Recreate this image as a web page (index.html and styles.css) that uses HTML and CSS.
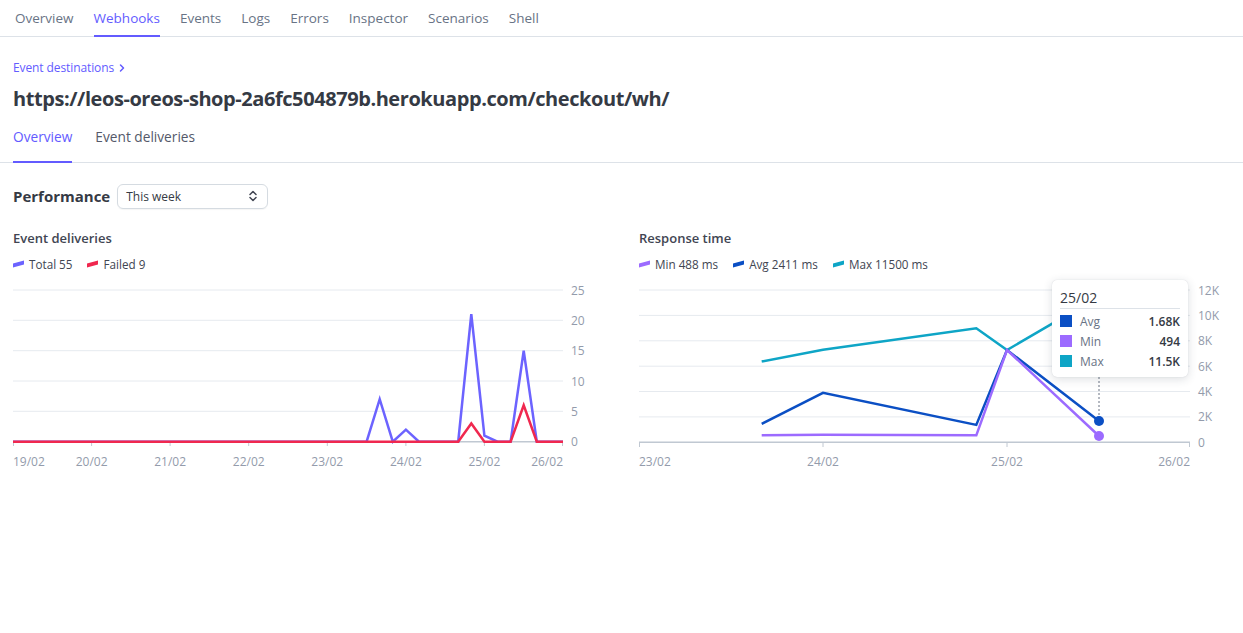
FILE: index.html
```html
<!DOCTYPE html>
<html lang="en">
<head>
<meta charset="utf-8">
<title>Webhook destination</title>
<link rel="stylesheet" href="styles.css">
</head>
<body>
<nav class="topnav">
  <a class="topnav-item">Overview</a>
  <a class="topnav-item is-active">Webhooks</a>
  <a class="topnav-item">Events</a>
  <a class="topnav-item">Logs</a>
  <a class="topnav-item">Errors</a>
  <a class="topnav-item">Inspector</a>
  <a class="topnav-item">Scenarios</a>
  <a class="topnav-item">Shell</a>
</nav>

<header class="header">
  <div class="breadcrumb">Event destinations
    <svg class="breadcrumb-chev" width="8" height="10" viewBox="0 0 8 10"><path d="M2.5 2L5.5 5 2.5 8" fill="none" stroke="#635bff" stroke-width="1.5" stroke-linecap="round" stroke-linejoin="round"/></svg>
  </div>
  <h1 class="title">https://leos-oreos-shop-2a6fc504879b.herokuapp.com/checkout/wh/</h1>
</header>

<div class="subtabs">
  <a class="subtab is-active">Overview</a>
  <a class="subtab">Event deliveries</a>
</div>

<section class="perf">
  <div class="perf-head">
    <h2 class="perf-title">Performance</h2>
    <div class="select">
      <span>This week</span>
      <svg width="12" height="14" viewBox="0 0 12 14"><path d="M3 5.5L6 2.5l3 3M3 8.5l3 3 3-3" fill="none" stroke="#414552" stroke-width="1.5" stroke-linecap="round" stroke-linejoin="round"/></svg>
    </div>
  </div>

  <div class="charts">
    <div class="chart">
      <h3 class="chart-title">Event deliveries</h3>
      <div class="legend">
        <span class="legend-item"><i class="swatch sw-total"></i>Total 55</span>
        <span class="legend-item"><i class="swatch sw-failed"></i>Failed 9</span>
      </div>
      <div class="plot">
        <svg width="580" height="190" viewBox="0 0 580 190">
          <g stroke="#e6eaef" stroke-width="1">
            <line x1="0" y1="10" x2="550" y2="10"/>
            <line x1="0" y1="40.3" x2="550" y2="40.3"/>
            <line x1="0" y1="70.7" x2="550" y2="70.7"/>
            <line x1="0" y1="101" x2="550" y2="101"/>
            <line x1="0" y1="131.3" x2="550" y2="131.3"/>
          </g>
          <line x1="0" y1="161.7" x2="550" y2="161.7" stroke="#c0c8d2" stroke-width="1.5"/>
          <g stroke="#c0c8d2" stroke-width="1">
            <line x1="0.5" y1="161.7" x2="0.5" y2="166"/>
            <line x1="78.6" y1="161.7" x2="78.6" y2="166"/>
            <line x1="157.1" y1="161.7" x2="157.1" y2="166"/>
            <line x1="235.7" y1="161.7" x2="235.7" y2="166"/>
            <line x1="314.3" y1="161.7" x2="314.3" y2="166"/>
            <line x1="392.9" y1="161.7" x2="392.9" y2="166"/>
            <line x1="471.4" y1="161.7" x2="471.4" y2="166"/>
            <line x1="549.5" y1="161.7" x2="549.5" y2="166"/>
          </g>
          <g class="axis-text">
            <text x="558" y="14.5">25</text>
            <text x="558" y="44.8">20</text>
            <text x="558" y="75.2">15</text>
            <text x="558" y="105.5">10</text>
            <text x="558" y="135.8">5</text>
            <text x="558" y="166.2">0</text>
          </g>
          <g class="axis-text">
            <text x="0" y="186">19/02</text>
            <text x="78.6" y="186" text-anchor="middle">20/02</text>
            <text x="157.1" y="186" text-anchor="middle">21/02</text>
            <text x="235.7" y="186" text-anchor="middle">22/02</text>
            <text x="314.3" y="186" text-anchor="middle">23/02</text>
            <text x="392.9" y="186" text-anchor="middle">24/02</text>
            <text x="471.4" y="186" text-anchor="middle">25/02</text>
            <text x="550" y="186" text-anchor="end">26/02</text>
          </g>
          <polyline fill="none" stroke="#6c63ff" stroke-width="2.5" points="0,161.7 353.6,161.7 366.7,119.2 379.8,161.7 392.9,149.6 406,161.7 445.2,161.7 458.3,34.2 471.4,155.6 484.5,161.7 497.6,161.7 510.7,70.7 523.8,161.7 550,161.7"/>
          <polyline fill="none" stroke="#f0284f" stroke-width="2.5" points="0,161.7 445.2,161.7 458.3,143.5 471.4,161.7 497.6,161.7 510.7,125.3 523.8,161.7 550,161.7"/>
        </svg>
      </div>
    </div>

    <div class="chart">
      <h3 class="chart-title">Response time</h3>
      <div class="legend">
        <span class="legend-item"><i class="swatch sw-min"></i>Min 488 ms</span>
        <span class="legend-item"><i class="swatch sw-avg"></i>Avg 2411 ms</span>
        <span class="legend-item"><i class="swatch sw-max"></i>Max 11500 ms</span>
      </div>
      <div class="plot">
        <svg width="580" height="190" viewBox="0 0 580 190">
          <g stroke="#e6eaef" stroke-width="1">
            <line x1="0" y1="10" x2="551" y2="10"/>
            <line x1="0" y1="35.4" x2="551" y2="35.4"/>
            <line x1="0" y1="60.8" x2="551" y2="60.8"/>
            <line x1="0" y1="86.2" x2="551" y2="86.2"/>
            <line x1="0" y1="111.5" x2="551" y2="111.5"/>
            <line x1="0" y1="136.9" x2="551" y2="136.9"/>
          </g>
          <line x1="0" y1="162.3" x2="551" y2="162.3" stroke="#c0c8d2" stroke-width="1.5"/>
          <g stroke="#c0c8d2" stroke-width="1">
            <line x1="0.5" y1="162.3" x2="0.5" y2="167"/>
            <line x1="184" y1="162.3" x2="184" y2="167"/>
            <line x1="368" y1="162.3" x2="368" y2="167"/>
            <line x1="550.5" y1="162.3" x2="550.5" y2="167"/>
          </g>
          <g class="axis-text">
            <text x="559" y="14.5">12K</text>
            <text x="559" y="39.9">10K</text>
            <text x="559" y="65.3">8K</text>
            <text x="559" y="90.7">6K</text>
            <text x="559" y="116">4K</text>
            <text x="559" y="141.4">2K</text>
            <text x="559" y="166.8">0</text>
          </g>
          <g class="axis-text">
            <text x="0" y="186">23/02</text>
            <text x="184" y="186" text-anchor="middle">24/02</text>
            <text x="368" y="186" text-anchor="middle">25/02</text>
            <text x="551" y="186" text-anchor="end">26/02</text>
          </g>
          <polyline fill="none" stroke="#0ea5c6" stroke-width="2.5" points="122.7,81.5 184,69.7 337.3,48.3 368,70 460,16.4"/>
          <polyline fill="none" stroke="#0b4fc4" stroke-width="2.5" points="122.7,143.9 184,112.8 337.3,144.9 368,70 460,141"/>
          <polyline fill="none" stroke="#9c6bff" stroke-width="2.5" points="122.7,155.3 184,154.7 337.3,155.3 368,70 460,156"/>
          <line x1="460" y1="97" x2="460" y2="136" stroke="#6a7383" stroke-width="1" stroke-dasharray="2 2"/>
          <circle cx="460" cy="141" r="5" fill="#0b4fc4"/>
          <circle cx="460" cy="156" r="5" fill="#9c6bff"/>
        </svg>
        <div class="tooltip">
          <div class="tooltip-title">25/02</div>
          <div class="tooltip-row"><i class="sq sq-avg"></i><span class="tt-label">Avg</span><span class="tt-val">1.68K</span></div>
          <div class="tooltip-row"><i class="sq sq-min"></i><span class="tt-label">Min</span><span class="tt-val">494</span></div>
          <div class="tooltip-row"><i class="sq sq-max"></i><span class="tt-label">Max</span><span class="tt-val">11.5K</span></div>
        </div>
      </div>
    </div>
  </div>
</section>
</body>
</html>
```

FILE: styles.css
```css
* { box-sizing: border-box; }
body {
  margin: 0;
  background: #fff;
  font-family: "Open Sans", "Noto Sans", "Liberation Sans", sans-serif;
  color: #353a44;
}
h1, h2, h3 { margin: 0; }

.topnav {
  display: flex;
  gap: 20px;
  padding: 1px 15px 0;
  border-bottom: 1px solid #dde2e8;
}
.topnav-item {
  font-size: 13.5px;
  font-weight: 500;
  line-height: 34px;
  color: #687385;
  border-bottom: 2px solid transparent;
  margin-bottom: -1px;
}
.topnav-item.is-active {
  color: #635bff;
  border-bottom-color: #635bff;
}

.header { padding: 23px 13px 0; }
.breadcrumb {
  font-size: 12px;
  line-height: 16px;
  color: #635bff;
  font-weight: 500;
  display: flex;
  align-items: center;
  gap: 4px;
  letter-spacing: -0.1px;
}
.title {
  margin-top: 9px;
  font-size: 20px;
  line-height: 28px;
  font-weight: 700;
  color: #353a44;
  letter-spacing: -0.43px;
}

.subtabs {
  display: flex;
  gap: 23px;
  padding: 0 13px;
  margin-top: 14px;
  border-bottom: 1px solid #dde2e8;
}
.subtab {
  font-size: 13.7px;
  font-weight: 500;
  line-height: 20px;
  padding-bottom: 14px;
  color: #545969;
  border-bottom: 2px solid transparent;
  margin-bottom: -1px;
}
.subtab.is-active {
  color: #635bff;
  border-bottom-color: #635bff;
}

.perf { padding: 0 13px; }
.perf-head {
  margin-top: 20px;
  display: flex;
  align-items: center;
  gap: 7px;
}
.perf-title {
  font-size: 15px;
  line-height: 26px;
  font-weight: 700;
  color: #353a44;
}
.select {
  width: 151px;
  height: 25px;
  border: 1px solid #d5dbe1;
  border-radius: 6px;
  box-shadow: 0 1px 1px rgba(0, 0, 0, 0.04);
  display: flex;
  align-items: center;
  justify-content: space-between;
  padding: 0 8px 0 8px;
  font-size: 12px;
  color: #353a44;
}

.charts {
  display: flex;
  gap: 50px;
  margin-top: 20px;
}
.chart { width: 576px; }
.chart-title {
  font-size: 13px;
  line-height: 18px;
  font-weight: 600;
  color: #414552;
}
.legend {
  margin-top: 9px;
  display: flex;
  gap: 15px;
  font-size: 11.7px;
  line-height: 16px;
  color: #414552;
}
.legend-item { display: flex; align-items: center; }
.swatch {
  display: inline-block;
  width: 11px;
  height: 3.5px;
  margin-right: 5px;
  transform: skewY(-16deg);
}
.sw-total { background: #6c63ff; }
.sw-failed { background: #f0284f; }
.sw-min { background: #9c6bff; }
.sw-avg { background: #0b4fc4; }
.sw-max { background: #0ea5c6; }

.plot {
  margin-top: 8px;
  position: relative;
  height: 190px;
}
.plot svg { display: block; overflow: visible; }
.axis-text text {
  font-family: "Open Sans", "Noto Sans", sans-serif;
  font-size: 12px;
  fill: #939bab;
}

.tooltip {
  position: absolute;
  left: 413px;
  top: 0;
  width: 136px;
  background: #fff;
  border-radius: 5px;
  box-shadow: 0 2px 10px rgba(40, 50, 70, 0.16), 0 0 1px rgba(40, 50, 70, 0.2);
  padding: 8px 8px 6px;
}
.tooltip-title {
  font-size: 14px;
  line-height: 20px;
  font-weight: 500;
  color: #353a44;
  border-bottom: 1px solid #dde2e8;
  margin-bottom: 2px;
}
.tooltip-row {
  display: flex;
  align-items: center;
  height: 20px;
  font-size: 12px;
}
.sq { width: 12px; height: 12px; margin-right: 8px; display: inline-block; }
.sq-avg { background: #0b4fc4; }
.sq-min { background: #9c6bff; }
.sq-max { background: #0ea5c6; }
.tt-label { color: #687385; flex: 1; }
.tt-val { color: #353a44; font-weight: 600; }
```
